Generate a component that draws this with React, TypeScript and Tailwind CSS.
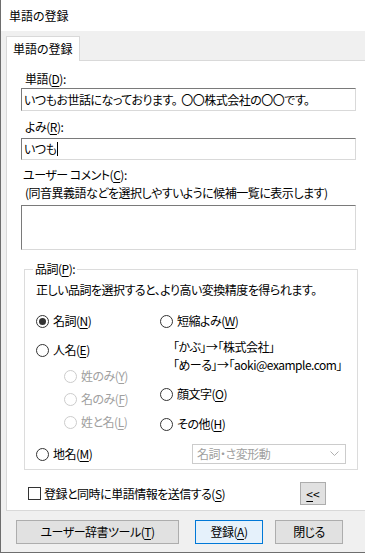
import React from "react";

const font = "font-['Yu_Gothic_UI','Noto_Sans_CJK_JP',sans-serif] [font-feature-settings:'palt'] tracking-[-0.5px]";

function U({ children }: { children: React.ReactNode }) {
  return <span className="underline underline-offset-[2px]">{children}</span>;
}

function Radio({
  checked = false,
  disabled = false,
  children,
}: {
  checked?: boolean;
  disabled?: boolean;
  children: React.ReactNode;
}) {
  return (
    <div className={`flex items-center h-[20px] gap-[4px] ${disabled ? "text-[#a0a0a0]" : "text-black"}`}>
      <span
        className={`w-[13px] h-[13px] rounded-full border flex items-center justify-center bg-white ${
          disabled ? "border-[#cccccc]" : "border-[#333333]"
        }`}
      >
        {checked && <span className="w-[7px] h-[7px] rounded-full bg-[#333333]" />}
      </span>
      <span>{children}</span>
    </div>
  );
}

const inset = "border border-t-[#7a7a7a] border-l-[#7a7a7a] border-r-[#d9d9d9] border-b-[#d9d9d9] bg-white";

export default function App() {
  return (
    <div className={`${font} text-[12px] leading-[16px] w-[365px] h-[553px] bg-[#f0f0f0] border-l border-b border-[#6e6e6e] flex flex-col overflow-hidden`}>
      {/* title bar */}
      <div className="h-[31px] bg-white flex items-center pl-[8px] shrink-0 tracking-normal">単語の登録</div>

      {/* tab */}
      <div className="pl-[5px] pt-[5px] flex">
        <div className="h-[25px] px-[6px] flex items-center bg-white border border-b-0 border-[#d9d9d9] -mb-px relative z-10 tracking-normal">
          単語の登録
        </div>
      </div>

      {/* panel */}
      <div className="ml-[5px] w-[370px] h-[451px] bg-white border border-[#d9d9d9] pl-[14px] shrink-0">
        <div className="mt-[10px] ml-[4px]">
          単語(<U>D</U>):
        </div>
        <div className={`mt-[1px] w-[335px] h-[23px] ${inset} flex items-center pl-[2px]`}>
          いつもお世話になっております。<span className="ml-[4px]">〇〇株式会社の〇〇です。</span>
        </div>

        <div className="mt-[8px] ml-[4px]">
          よみ(<U>R</U>):
        </div>
        <div className={`mt-[3px] w-[335px] h-[22px] ${inset} flex items-center pl-[2px]`}>
          いつも<span className="inline-block w-px h-[14px] bg-black ml-[1px]" />
        </div>

        <div className="mt-[7px] ml-[2px]">
          ユーザー コメント(<U>C</U>):
        </div>
        <div className="mt-[2px] ml-[4px]">(同音異義語などを選択しやすいように候補一覧に表示します)</div>
        <div className={`mt-[4px] w-[335px] h-[45px] ${inset}`} />

        {/* group box */}
        <div className="mt-[19px] ml-[3px] w-[334px] h-[201px] border border-[#dcdcdc] pl-[11px]">
          <div className="-mt-[9px] ml-[-3px] w-fit bg-white px-[2px]">
            品詞(<U>P</U>):
          </div>
          <div className="mt-[5px]">正しい品詞を選択すると、より高い変換精度を得られます。</div>

          <div className="mt-[13px] flex">
            <div className="w-[124px] flex flex-col">
              <Radio checked>
                名詞(<U>N</U>)
              </Radio>
              <div className="mt-[9px]">
                <Radio>
                  人名(<U>E</U>)
                </Radio>
              </div>
              <div className="mt-[6px] ml-[28px] flex flex-col gap-[3px]">
                <Radio disabled>
                  姓のみ(<U>Y</U>)
                </Radio>
                <Radio disabled>
                  名のみ(<U>F</U>)
                </Radio>
                <Radio disabled>
                  姓と名(<U>L</U>)
                </Radio>
              </div>
            </div>
            <div className="flex flex-col">
              <Radio>
                短縮よみ(<U>W</U>)
              </Radio>
              <div className="ml-[13px] mt-[7px] leading-[18px]">
                <div>「かぶ」→「株式会社」</div>
                <div>「めーる」→「aoki@example.com」</div>
              </div>
              <div className="mt-[10px]">
                <Radio>
                  顔文字(<U>O</U>)
                </Radio>
              </div>
              <div className="mt-[10px]">
                <Radio>
                  その他(<U>H</U>)
                </Radio>
              </div>
            </div>
          </div>

          <div className="mt-[10px] flex items-center">
            <div className="w-[156px]">
              <Radio>
                地名(<U>M</U>)
              </Radio>
            </div>
            <div className="w-[154px] h-[20px] border border-[#cccccc] flex items-center justify-between pl-[4px] pr-[6px] text-[#a0a0a0]">
              <span>名詞・さ変形動</span>
              <svg width="9" height="6" viewBox="0 0 9 6">
                <path d="M0.5 0.5 L4.5 4.5 L8.5 0.5" fill="none" stroke="#b0b0b0" strokeWidth="1" />
              </svg>
            </div>
          </div>
        </div>

        {/* checkbox row */}
        <div className="mt-[12px] flex items-center">
          <div className="ml-[7px] flex items-center gap-[3px] w-[272px]">
            <span className="w-[13px] h-[13px] border border-[#333333] bg-white" />
            <span>
              登録と同時に単語情報を送信する(<U>S</U>)
            </span>
          </div>
          <div className="w-[26px] h-[23px] bg-[#e1e1e1] border border-[#adadad] flex items-center justify-center text-[12px] tracking-normal">
            <U>&lt;</U>&lt;
          </div>
        </div>
      </div>

      {/* bottom buttons */}
      <div className="mt-[9px] flex pl-[15px]">
        <div className="w-[163px] h-[24px] bg-[#e1e1e1] border border-[#adadad] flex items-center justify-center">
          ユーザー辞書ツール(<U>T</U>)
        </div>
        <div className="ml-[16px] w-[68px] h-[24px] bg-[#e5f1fb] border border-[#0078d7] flex items-center justify-center">
          登録(<U>A</U>)
        </div>
        <div className="ml-[12px] w-[68px] h-[24px] bg-[#e1e1e1] border border-[#adadad] flex items-center justify-center">
          閉じる
        </div>
      </div>
    </div>
  );
}
